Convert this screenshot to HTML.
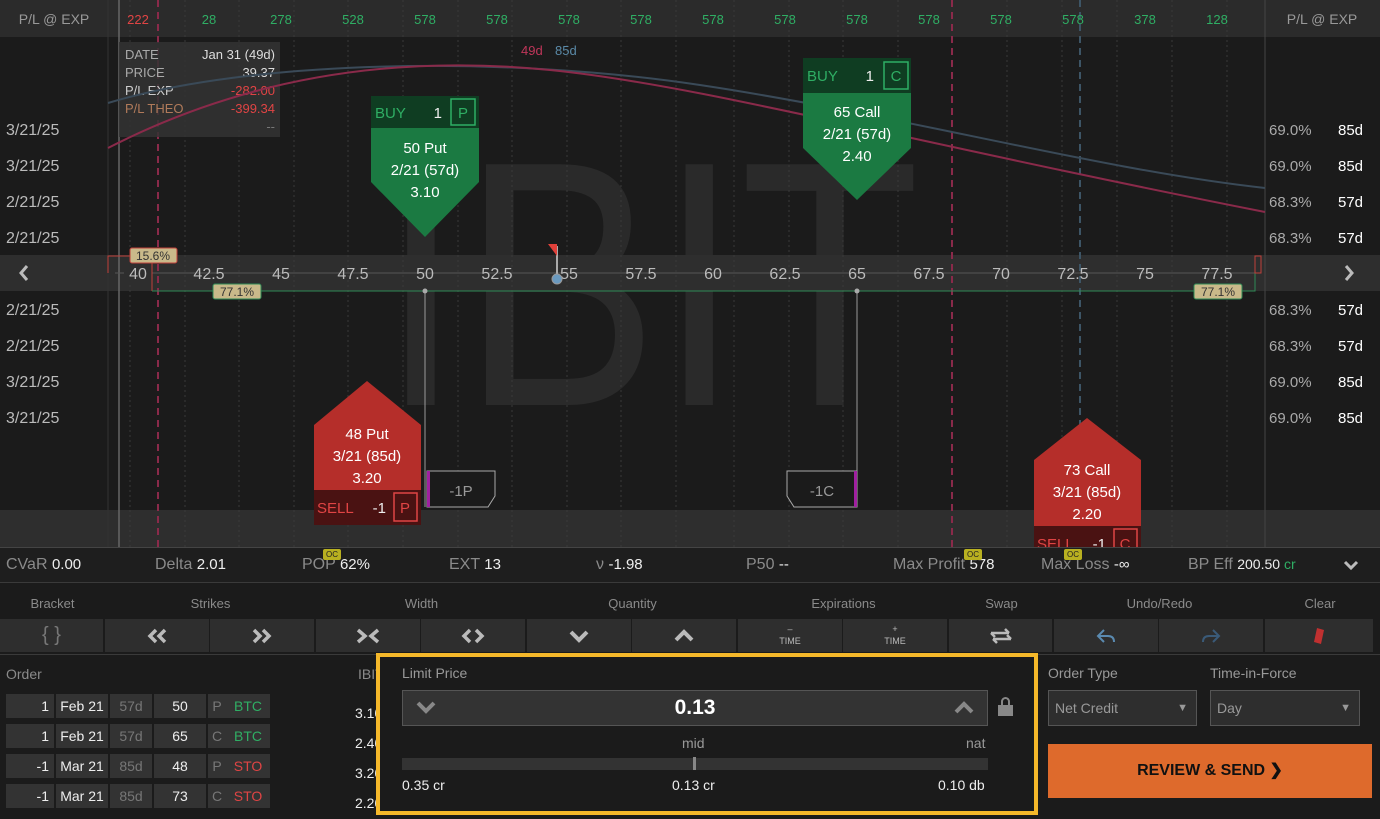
<!DOCTYPE html>
<html><head><meta charset="utf-8"><style>
*{margin:0;padding:0;box-sizing:border-box}
body{width:1380px;height:819px;background:#1b1b1b;font-family:"Liberation Sans",sans-serif;color:#ddd;position:relative;overflow:hidden}
.a{position:absolute}
.stat{position:absolute;top:556px;font-size:16px;color:#8a8a8a;white-space:nowrap}
.stat b{font-weight:normal;color:#eee;font-size:15px}
.lbl{position:absolute;top:596px;font-size:13px;color:#8a8a8a;text-align:center}
.btn{position:absolute;top:619px;height:33px;background:#2e2e2e;color:#bbb;text-align:center;line-height:33px;font-size:20px;font-weight:bold}
.btn svg{position:absolute;left:50%;top:50%;transform:translate(-50%,-50%)}
.row{position:absolute;left:6px;height:24px;font-size:14px}
.row span{position:absolute;top:0;height:24px;line-height:24px;text-align:center;background:#333}
</style></head><body>
<svg class="a" style="left:0;top:0" width="1380" height="547" font-family="Liberation Sans, sans-serif">
<rect x="0" y="0" width="1380" height="37" fill="#2b2b2b"/>
<rect x="0" y="37" width="1380" height="510" fill="#1b1b1b"/>
<text x="650" y="405" font-size="350" fill="#2a2a2a" text-anchor="middle" textLength="540" lengthAdjust="spacingAndGlyphs">IBIT</text>
<rect x="0" y="255" width="1380" height="36" fill="#2e2e2e"/>
<rect x="0" y="510" width="1380" height="37" fill="#2e2e2e"/>
<g stroke="#3a3a3a" stroke-dasharray="2,3">
<line x1="130" y1="0" x2="130" y2="547"/><line x1="185" y1="0" x2="185" y2="547"/><line x1="239" y1="0" x2="239" y2="547"/><line x1="294" y1="0" x2="294" y2="547"/><line x1="348" y1="0" x2="348" y2="547"/><line x1="403" y1="0" x2="403" y2="547"/><line x1="458" y1="0" x2="458" y2="547"/><line x1="512" y1="0" x2="512" y2="547"/><line x1="567" y1="0" x2="567" y2="547"/><line x1="621" y1="0" x2="621" y2="547"/><line x1="676" y1="0" x2="676" y2="547"/><line x1="734" y1="0" x2="734" y2="547"/><line x1="789" y1="0" x2="789" y2="547"/><line x1="843" y1="0" x2="843" y2="547"/><line x1="898" y1="0" x2="898" y2="547"/><line x1="1007" y1="0" x2="1007" y2="547"/><line x1="1062" y1="0" x2="1062" y2="547"/><line x1="1117" y1="0" x2="1117" y2="547"/><line x1="1172" y1="0" x2="1172" y2="547"/><line x1="1227" y1="0" x2="1227" y2="547"/>
</g>
<line x1="108" y1="0" x2="108" y2="547" stroke="#333"/>
<line x1="1265" y1="0" x2="1265" y2="547" stroke="#444"/>
<line x1="119" y1="0" x2="119" y2="547" stroke="#666" stroke-width="1.5"/>
<line x1="158" y1="0" x2="158" y2="547" stroke="#8a2a4a" stroke-width="2" stroke-dasharray="7,5"/>
<line x1="952" y1="0" x2="952" y2="547" stroke="#8a2a4a" stroke-width="2" stroke-dasharray="7,5"/>
<line x1="1080" y1="0" x2="1080" y2="547" stroke="#3d5566" stroke-width="2" stroke-dasharray="7,5"/>
<rect x="119" y="42" width="161" height="95" fill="#333" opacity="0.85"/>
<g font-size="13">
<text x="125" y="59" fill="#aaa">DATE</text><text x="275" y="59" fill="#ddd" text-anchor="end">Jan 31 (49d)</text>
<text x="125" y="77" fill="#aaa">PRICE</text><text x="275" y="77" fill="#ddd" text-anchor="end">39.37</text>
<text x="125" y="95" fill="#ccc">P/L EXP</text><text x="275" y="95" fill="#e04444" text-anchor="end">-282.00</text>
<text x="125" y="113" fill="#b07a5a">P/L THEO</text><text x="275" y="113" fill="#e04444" text-anchor="end">-399.34</text>
<text x="275" y="131" fill="#777" text-anchor="end">--</text>
</g>
<path d="M108,103 C250,60 500,55 700,85 S1100,170 1265,188" fill="none" stroke="#3a4a58" stroke-width="2"/>
<path d="M108,148 C250,75 400,55 550,70 S900,140 1265,212" fill="none" stroke="#8a2a4a" stroke-width="2"/>
<text x="521" y="55" font-size="13" fill="#c0365a">49d</text><text x="555" y="55" font-size="13" fill="#5a8aa8">85d</text>
<text x="54" y="24" font-size="14" fill="#999" text-anchor="middle">P/L @ EXP</text>
<text x="1322" y="24" font-size="14" fill="#999" text-anchor="middle">P/L @ EXP</text>
<g font-size="13" text-anchor="middle" fill="#2fae64">
<text x="138" y="24" fill="#e04444">222</text><text x="209" y="24">28</text><text x="281" y="24">278</text><text x="353" y="24">528</text><text x="425" y="24">578</text><text x="497" y="24">578</text><text x="569" y="24">578</text><text x="641" y="24">578</text><text x="713" y="24">578</text><text x="785" y="24">578</text><text x="857" y="24">578</text><text x="929" y="24">578</text><text x="1001" y="24">578</text><text x="1073" y="24">578</text><text x="1145" y="24">378</text><text x="1217" y="24">128</text>
</g>
<g font-size="16" fill="#bbb">
<text x="6" y="135">3/21/25</text><text x="6" y="171">3/21/25</text><text x="6" y="207">2/21/25</text><text x="6" y="243">2/21/25</text>
<text x="6" y="315">2/21/25</text><text x="6" y="351">2/21/25</text><text x="6" y="387">3/21/25</text><text x="6" y="423">3/21/25</text>
</g>
<g font-size="15" fill="#aaa"><text x="1269" y="135">69.0%</text><text x="1269" y="171">69.0%</text><text x="1269" y="207">68.3%</text><text x="1269" y="243">68.3%</text><text x="1269" y="315">68.3%</text><text x="1269" y="351">68.3%</text><text x="1269" y="387">69.0%</text><text x="1269" y="423">69.0%</text></g>
<g font-size="15" fill="#fff"><text x="1338" y="135">85d</text><text x="1338" y="171">85d</text><text x="1338" y="207">57d</text><text x="1338" y="243">57d</text><text x="1338" y="315">57d</text><text x="1338" y="351">57d</text><text x="1338" y="387">85d</text><text x="1338" y="423">85d</text></g>
<line x1="115" y1="273" x2="1255" y2="273" stroke="#555"/>
<g font-size="16" fill="#bbb" text-anchor="middle">
<rect x="124" y="262" width="28" height="20" fill="#2e2e2e"/>
<text x="138" y="279">40</text><text x="209" y="279">42.5</text><text x="281" y="279">45</text><text x="353" y="279">47.5</text><text x="425" y="279">50</text><text x="497" y="279">52.5</text><text x="569" y="279">55</text><text x="641" y="279">57.5</text><text x="713" y="279">60</text><text x="785" y="279">62.5</text><text x="857" y="279">65</text><text x="929" y="279">67.5</text><text x="1001" y="279">70</text><text x="1073" y="279">72.5</text><text x="1145" y="279">75</text><text x="1217" y="279">77.5</text>
</g>
<path d="M108,273 V256 H152 V291" fill="none" stroke="#c0403a"/>
<path d="M152,291 H1255 V256 H1261 V273" fill="none" stroke="#2f8a55"/>
<rect x="1255" y="256" width="6" height="17" fill="none" stroke="#c0403a"/>
<rect x="130" y="248" width="47" height="15" rx="2" fill="#c9b98a" stroke="#c0403a"/><text x="153" y="260" font-size="12" fill="#333" text-anchor="middle">15.6%</text>
<rect x="213" y="284" width="48" height="15" rx="2" fill="#c9b98a" stroke="#2f8a55"/><text x="237" y="296" font-size="12" fill="#333" text-anchor="middle">77.1%</text>
<rect x="1194" y="284" width="48" height="15" rx="2" fill="#c9b98a" stroke="#2f8a55"/><text x="1218" y="296" font-size="12" fill="#333" text-anchor="middle">77.1%</text>
<path d="M27,266 l-6,7 l6,7" stroke="#bbb" stroke-width="3" fill="none"/>
<path d="M1346,266 l6,7 l-6,7" stroke="#bbb" stroke-width="3" fill="none"/>
<line x1="557" y1="246" x2="557" y2="279" stroke="#aaa" stroke-width="2"/>
<path d="M548,244 L557,244 L557,256 Z" fill="#e0403a"/>
<circle cx="557" cy="279" r="5" fill="#6a9ac0" stroke="#999"/>
<line x1="425" y1="291" x2="425" y2="507" stroke="#999"/><circle cx="425" cy="291" r="2.5" fill="#aaa"/>
<line x1="857" y1="291" x2="857" y2="507" stroke="#999"/><circle cx="857" cy="291" r="2.5" fill="#aaa"/>
<path d="M427,471 H495 V496 L488,507 H427 Z" fill="#1b1b1b" stroke="#aaa"/><rect x="427" y="471" width="3" height="36" fill="#a020a0"/>
<text x="461" y="496" font-size="15" fill="#999" text-anchor="middle">-1P</text>
<path d="M857,471 H787 V496 L794,507 H857 Z" fill="#1b1b1b" stroke="#aaa"/><rect x="854" y="471" width="3" height="36" fill="#a020a0"/>
<text x="822" y="496" font-size="15" fill="#999" text-anchor="middle">-1C</text>
<g>
<path d="M371,128 H479 V182 L425,237 L371,182 Z" fill="#1b7a42"/>
<rect x="371" y="96" width="108" height="32" fill="#0f3d22"/>
<text x="375" y="118" font-size="15" fill="#2fae64">BUY</text><text x="442" y="118" font-size="15" fill="#eee" text-anchor="end">1</text>
<rect x="451" y="99" width="24" height="26" fill="none" stroke="#2fae64" stroke-width="1.5"/><text x="463" y="118" font-size="15" fill="#2fae64" text-anchor="middle">P</text>
<g font-size="15" fill="#fff" text-anchor="middle"><text x="425" y="153">50 Put</text><text x="425" y="175">2/21 (57d)</text><text x="425" y="197">3.10</text></g>
</g>
<g>
<path d="M803,93 H911 V148 L857,200 L803,148 Z" fill="#1b7a42"/>
<rect x="803" y="58" width="108" height="35" fill="#0f3d22"/>
<text x="807" y="81" font-size="15" fill="#2fae64">BUY</text><text x="874" y="81" font-size="15" fill="#eee" text-anchor="end">1</text>
<rect x="884" y="62" width="24" height="27" fill="none" stroke="#2fae64" stroke-width="1.5"/><text x="896" y="81" font-size="15" fill="#2fae64" text-anchor="middle">C</text>
<g font-size="15" fill="#fff" text-anchor="middle"><text x="857" y="117">65 Call</text><text x="857" y="139">2/21 (57d)</text><text x="857" y="161">2.40</text></g>
</g>
<g>
<path d="M314,425 L367,381 L421,425 V490 H314 Z" fill="#b52e2a"/>
<rect x="314" y="490" width="107" height="35" fill="#4a1212"/>
<text x="317" y="513" font-size="15" fill="#e04444">SELL</text><text x="386" y="513" font-size="15" fill="#eee" text-anchor="end">-1</text>
<rect x="394" y="493" width="23" height="28" fill="none" stroke="#e04444" stroke-width="1.5"/><text x="405" y="513" font-size="15" fill="#e04444" text-anchor="middle">P</text>
<g font-size="15" fill="#fff" text-anchor="middle"><text x="367" y="439">48 Put</text><text x="367" y="461">3/21 (85d)</text><text x="367" y="483">3.20</text></g>
</g>
<g>
<path d="M1034,460 L1087,418 L1141,460 V526 H1034 Z" fill="#b52e2a"/>
<rect x="1034" y="526" width="107" height="21" fill="#4a1212"/>
<text x="1037" y="549" font-size="15" fill="#e04444">SELL</text><text x="1106" y="549" font-size="15" fill="#eee" text-anchor="end">-1</text>
<rect x="1114" y="529" width="23" height="28" fill="none" stroke="#e04444" stroke-width="1.5"/><text x="1125" y="549" font-size="15" fill="#e04444" text-anchor="middle">C</text>
<g font-size="15" fill="#fff" text-anchor="middle"><text x="1087" y="475">73 Call</text><text x="1087" y="497">3/21 (85d)</text><text x="1087" y="519">2.20</text></g>
</g>
</svg>
<div class="a" style="left:0;top:547px;width:1380px;height:36px;background:#1e1e1e;border-top:1px solid #444;border-bottom:1px solid #3a3a3a"></div>
<div class="stat" style="left:6px">CVaR <b>0.00</b></div>
<div class="stat" style="left:155px">Delta <b>2.01</b></div>
<div class="stat" style="left:302px">POP <b>62%</b></div>
<div class="stat" style="left:449px">EXT <b>13</b></div>
<div class="stat" style="left:596px">ν <b>-1.98</b></div>
<div class="stat" style="left:746px">P50 <b>--</b></div>
<div class="stat" style="left:893px">Max Profit <b>578</b></div>
<div class="stat" style="left:1041px">Max Loss <b>-∞</b></div>
<div class="stat" style="left:1188px">BP Eff <b style="font-size:14px">200.50 <span style="color:#2fae64">cr</span></b></div>
<svg class="a" style="left:1343px;top:559px" width="16" height="12"><path d="M2,3 L8,9 L14,3" stroke="#bbb" stroke-width="3" fill="none"/></svg>
<div class="a" style="left:323px;top:549px;width:18px;height:11px;background:#b8b020;color:#222;font-size:8px;text-align:center;line-height:11px;border-radius:2px">OC</div>
<div class="a" style="left:964px;top:549px;width:18px;height:11px;background:#b8b020;color:#222;font-size:8px;text-align:center;line-height:11px;border-radius:2px">OC</div>
<div class="a" style="left:1064px;top:549px;width:18px;height:11px;background:#b8b020;color:#222;font-size:8px;text-align:center;line-height:11px;border-radius:2px">OC</div>
<div class="lbl" style="left:0;width:105px">Bracket</div>
<div class="lbl" style="left:105px;width:211px">Strikes</div>
<div class="lbl" style="left:316px;width:211px">Width</div>
<div class="lbl" style="left:527px;width:211px">Quantity</div>
<div class="lbl" style="left:738px;width:211px">Expirations</div>
<div class="lbl" style="left:949px;width:105px">Swap</div>
<div class="lbl" style="left:1054px;width:211px">Undo/Redo</div>
<div class="lbl" style="left:1265px;width:110px">Clear</div>
<div class="btn" style="left:0;width:103px;font-weight:normal;color:#777">{ }</div>
<div class="btn" style="left:105px;width:104px"><svg width="24" height="16"><path d="M11,2 L5,8 L11,14 M20,2 L14,8 L20,14" stroke="#bbb" stroke-width="3.5" fill="none"/></svg></div>
<div class="btn" style="left:210px;width:104px"><svg width="24" height="16"><path d="M4,2 L10,8 L4,14 M13,2 L19,8 L13,14" stroke="#bbb" stroke-width="3.5" fill="none"/></svg></div>
<div class="btn" style="left:316px;width:104px"><svg width="26" height="16"><path d="M3,2 L10,8 L3,14 M23,2 L16,8 L23,14" stroke="#bbb" stroke-width="3.5" fill="none"/></svg></div>
<div class="btn" style="left:421px;width:104px"><svg width="26" height="16"><path d="M10,2 L4,8 L10,14 M16,2 L22,8 L16,14" stroke="#bbb" stroke-width="3.5" fill="none"/></svg></div>
<div class="btn" style="left:527px;width:104px"><svg width="22" height="14"><path d="M3,3 L11,11 L19,3" stroke="#bbb" stroke-width="4" fill="none"/></svg></div>
<div class="btn" style="left:632px;width:104px"><svg width="22" height="14"><path d="M3,11 L11,3 L19,11" stroke="#bbb" stroke-width="4" fill="none"/></svg></div>
<div class="btn" style="left:738px;width:104px;font-size:9px;line-height:12px;padding-top:4px;font-weight:normal">–<br>TIME</div><div class="btn" style="left:843px;width:104px;font-size:9px;line-height:12px;padding-top:4px;font-weight:normal">+<br>TIME</div>
<div class="btn" style="left:949px;width:103px"><svg width="28" height="18"><path d="M4,6 H22 M18,2 L22,6 M4,6 L8,10 M24,12 H6 M10,16 L6,12 M24,12 L20,8" stroke="#bbb" stroke-width="2.5" fill="none"/></svg></div>
<div class="btn" style="left:1054px;width:104px"><svg width="20" height="16"><path d="M8,2 L2,8 L8,14 M2,8 H12 Q18,8 18,14" stroke="#5a8ab0" stroke-width="2" fill="none"/></svg></div>
<div class="btn" style="left:1159px;width:104px"><svg width="20" height="16"><path d="M12,2 L18,8 L12,14 M18,8 H8 Q2,8 2,14" stroke="#3a5a78" stroke-width="2" fill="none"/></svg></div>
<div class="btn" style="left:1265px;width:108px"><svg width="14" height="20"><path d="M5,2 L12,4 L9,18 L2,16 Z" fill="#c03030"/></svg></div>
<div class="a" style="left:0;top:654px;width:1380px;height:1px;background:#3a3a3a"></div>
<div class="a" style="left:6px;top:666px;font-size:14px;color:#8a8a8a">Order</div>
<div class="a" style="left:358px;top:666px;font-size:14px;color:#8a8a8a">IBIT</div>
<div class="row" style="top:694px"><span style="left:0;width:48px;text-align:right;padding-right:5px;color:#eee">1</span><span style="left:50px;width:52px;color:#eee">Feb 21</span><span style="left:104px;width:42px;color:#777">57d</span><span style="left:148px;width:52px;color:#eee">50</span><span style="left:202px;width:18px;color:#777">P</span><span style="left:220px;width:44px;color:#2fae64">BTC</span></div>
<div class="row" style="top:724px"><span style="left:0;width:48px;text-align:right;padding-right:5px;color:#eee">1</span><span style="left:50px;width:52px;color:#eee">Feb 21</span><span style="left:104px;width:42px;color:#777">57d</span><span style="left:148px;width:52px;color:#eee">65</span><span style="left:202px;width:18px;color:#777">C</span><span style="left:220px;width:44px;color:#2fae64">BTC</span></div>
<div class="row" style="top:754px"><span style="left:0;width:48px;text-align:right;padding-right:5px;color:#eee">-1</span><span style="left:50px;width:52px;color:#eee">Mar 21</span><span style="left:104px;width:42px;color:#777">85d</span><span style="left:148px;width:52px;color:#eee">48</span><span style="left:202px;width:18px;color:#777">P</span><span style="left:220px;width:44px;color:#e04444">STO</span></div>
<div class="row" style="top:784px"><span style="left:0;width:48px;text-align:right;padding-right:5px;color:#eee">-1</span><span style="left:50px;width:52px;color:#eee">Mar 21</span><span style="left:104px;width:42px;color:#777">85d</span><span style="left:148px;width:52px;color:#eee">73</span><span style="left:202px;width:18px;color:#777">C</span><span style="left:220px;width:44px;color:#e04444">STO</span></div>
<div class="a" style="left:355px;top:698px;font-size:14px;color:#eee;line-height:30px">3.10<br>2.40<br>3.20<br>2.20</div>
<div class="a" style="left:376px;top:653px;width:662px;height:162px;border:4px solid #f5b82a;background:#1b1b1b"></div>
<div class="a" style="left:402px;top:665px;font-size:14px;color:#999">Limit Price</div>
<div class="a" style="left:402px;top:690px;width:586px;height:36px;background:#333;border:1px solid #555;text-align:center;line-height:34px;font-size:21px;font-weight:bold;color:#fff">0.13</div>
<svg class="a" style="left:415px;top:700px" width="22" height="14"><path d="M3,3 L11,11 L19,3" stroke="#888" stroke-width="4" fill="none"/></svg>
<svg class="a" style="left:953px;top:701px" width="22" height="14"><path d="M3,11 L11,3 L19,11" stroke="#888" stroke-width="4" fill="none"/></svg>
<div class="a" style="left:998px;top:697px;width:14px;height:20px"><div class="a" style="left:3px;top:0;width:9px;height:10px;border:2px solid #888;border-bottom:none;border-radius:5px 5px 0 0"></div><div class="a" style="left:0;top:8px;width:15px;height:11px;background:#888"></div></div>
<div class="a" style="left:682px;top:735px;font-size:14px;color:#999">mid</div>
<div class="a" style="left:966px;top:735px;font-size:14px;color:#999">nat</div>
<div class="a" style="left:402px;top:758px;width:586px;height:12px;background:#333"></div>
<div class="a" style="left:693px;top:757px;width:3px;height:13px;background:#888"></div>
<div class="a" style="left:402px;top:777px;font-size:14px;color:#eee">0.35 cr</div>
<div class="a" style="left:672px;top:777px;font-size:14px;color:#eee">0.13 cr</div>
<div class="a" style="left:938px;top:777px;font-size:14px;color:#eee">0.10 db</div>
<div class="a" style="left:1048px;top:665px;font-size:14px;color:#999">Order Type</div>
<div class="a" style="left:1210px;top:665px;font-size:14px;color:#999">Time-in-Force</div>
<div class="a" style="left:1048px;top:690px;width:149px;height:36px;background:#2e2e2e;border:1px solid #555;font-size:14px;color:#999;line-height:34px;padding-left:6px">Net Credit<span style="position:absolute;right:8px;font-size:11px">▼</span></div>
<div class="a" style="left:1210px;top:690px;width:150px;height:36px;background:#2e2e2e;border:1px solid #555;font-size:14px;color:#999;line-height:34px;padding-left:6px">Day<span style="position:absolute;right:8px;font-size:11px">▼</span></div>
<div class="a" style="left:1048px;top:744px;width:324px;height:54px;background:#de6a2c;text-align:center;line-height:54px;font-size:16px;font-weight:bold;color:#111">REVIEW &amp; SEND &#10095;</div>
</body></html>
